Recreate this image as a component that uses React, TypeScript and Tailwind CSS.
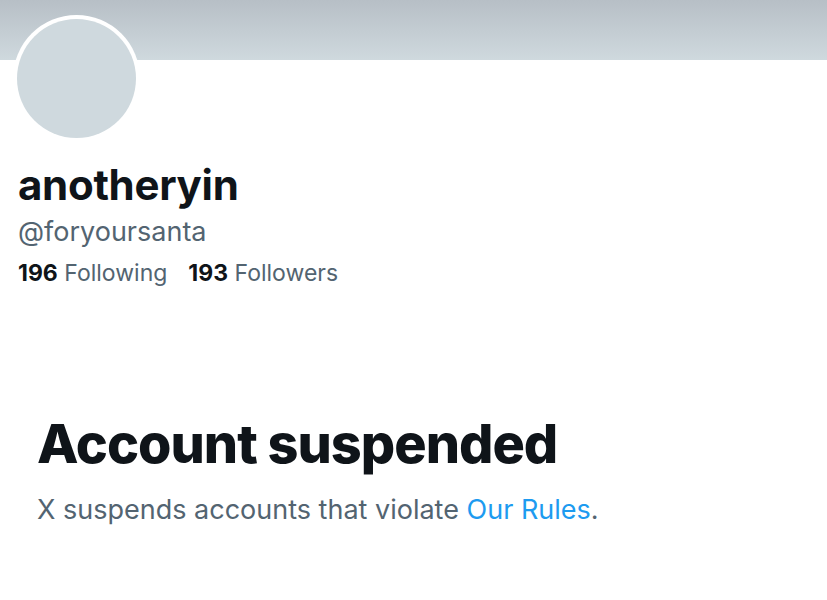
export default function App() {
  return (
    <div className="min-h-[600px] w-full bg-white font-['Inter',sans-serif] text-[#0f1419]">
      <div className="h-[60px] w-full bg-gradient-to-b from-[#b7bfc6] to-[#cfd9de]" />
      <div className="px-[18px]">
        <div className="-mt-[45px] ml-[-5px] h-[127px] w-[127px] rounded-full bg-white p-[4px]">
          <div className="h-full w-full rounded-full bg-[#cfd9de]" />
        </div>
        <div className="mt-[18px] text-[42px] font-bold leading-[50px] tracking-[-0.3px]">anotheryin</div>
        <div className="mt-[5px] text-[27px] leading-[34px] text-[#536471]">@foryoursanta</div>
        <div className="mt-[9px] flex gap-[21px] text-[23px] leading-[30px]">
          <span>
            <span className="font-bold">196</span> <span className="text-[#536471]">Following</span>
          </span>
          <span>
            <span className="font-bold">193</span> <span className="text-[#536471]">Followers</span>
          </span>
        </div>
      </div>
      <div className="mt-[124px] px-[37px]">
        <h1 className="text-[54px] font-extrabold leading-[64px] tracking-[-1px]">Account suspended</h1>
        <p className="mt-[17px] text-[27px] leading-[34px] text-[#536471]">
          X suspends accounts that violate <span className="text-[#1d9bf0]">Our Rules</span>.
        </p>
      </div>
    </div>
  );
}
